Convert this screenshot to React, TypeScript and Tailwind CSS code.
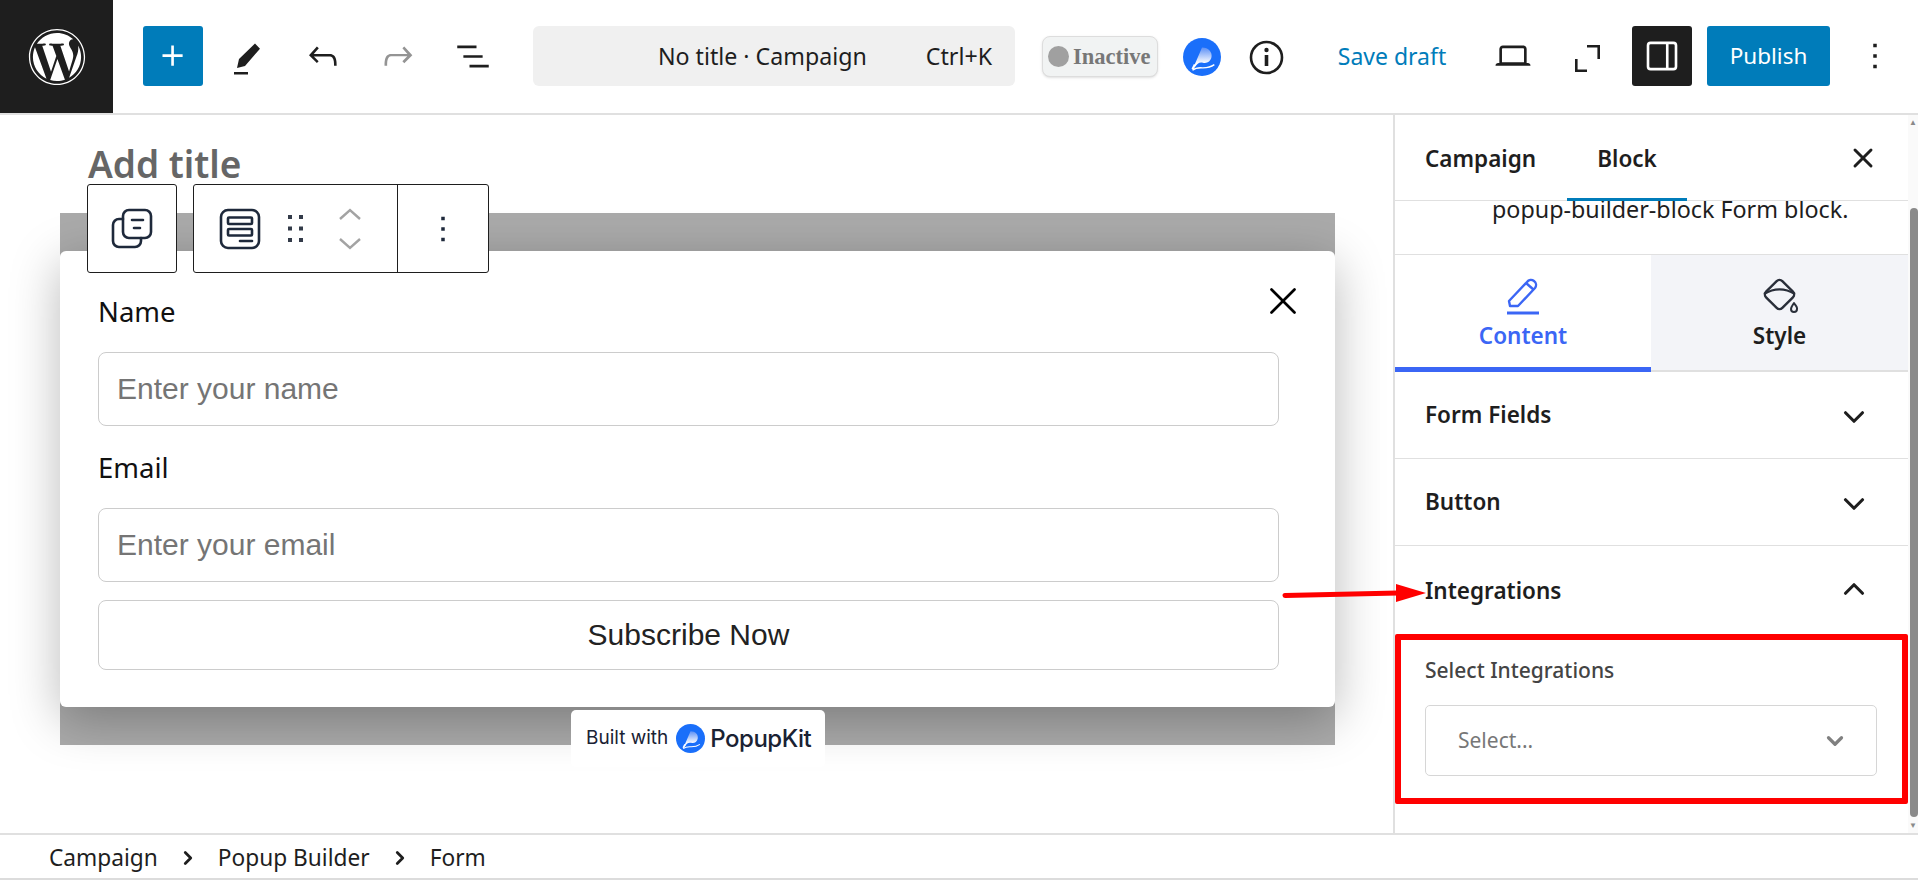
import React from 'react';
import { FaWordpress } from 'react-icons/fa';
import { ChevronDown, ChevronRight, ChevronUp, X } from 'lucide-react';

const WpIcon: React.FC<{ d: string; className?: string; size?: number; box?: number }> = ({ d, className = 'fill-[#1e1e1e]', size = 42, box = 24 }) => (
  <svg width={size} height={size} viewBox={`0 0 ${box} ${box}`} className={className}>
    <path d={d} />
  </svg>
);

const PopupKitLogo: React.FC<{ size: number }> = ({ size }) => (
  <svg width={size} height={size} viewBox="0 0 40 40">
    <defs>
      <linearGradient id="pk" x1="0" y1="0" x2="0" y2="1">
        <stop offset="0" stopColor="#5c90f6" />
        <stop offset="0.8" stopColor="#ffffff" />
      </linearGradient>
    </defs>
    <circle cx="20" cy="20" r="20" fill="#1a6ffa" />
    <path d="M11 31 L20 10 C27 10 31 15 30 20 C29 25 25 27 21 26 C17 25 15 27 13 30Z" fill="url(#pk)" />
    <path d="M10 33 L12.500 28" fill="none" stroke="#ffffff" strokeWidth="2.400" />
    <path d="M10 34 C17 28 23 35 33 28" fill="none" stroke="#ffffff" strokeWidth="1.400" />
  </svg>
);

const IconSlot: React.FC<{ children: React.ReactNode; className?: string }> = ({ children, className = '' }) => (
  <div className={`w-[60px] h-[60px] rounded-[3px] flex items-center justify-center shrink-0 ${className}`}>{children}</div>
);

const Header: React.FC = () => (
  <header className="h-[115px] shrink-0 flex items-start border-b-2 border-[#e0e0e0] bg-white">
    <div className="w-[113px] h-[113px] bg-[#1e1e1e] flex items-center justify-center shrink-0">
      <FaWordpress size={58} className="text-white" />
    </div>
    <div className="flex items-center gap-[15px] ml-[30px] mt-[26px]">
      <IconSlot className="bg-[#007cba]">
        <WpIcon d="M11 12.5V17.5H12.5V12.5H17.5V11H12.5V6H11V11H6V12.5H11Z" className="fill-white" />
      </IconSlot>
      <IconSlot>
        <WpIcon box={42} d="M28 8.500 33 13.700 18 31 10 33 12 24ZM7 37h14v2.400H7Z" />
      </IconSlot>
      <IconSlot>
        <WpIcon d="M18.3 11.700c-.6-.6-1.400-.9-2.300-.9H6.700l2.900-3.300-1.100-1-4.500 5L8.500 16l1-1-2.700-2.700H16c.5 0 .9.2 1.300.5 1 1 1 3.400 1 4.500v.3h1.500v-.2c0-1.500 0-4.300-1.500-5.700z" />
      </IconSlot>
      <IconSlot>
        <WpIcon d="M15.600 6.500l-1.100 1 2.900 3.300H8c-.9 0-1.700.3-2.300.9-1.400 1.500-1.400 4.200-1.400 5.600v.2h1.500v-.3c0-1.100 0-3.500 1-4.500.3-.3.7-.5 1.300-.5h9.200L14.500 15l1.100 1.100 4.600-4.600-4.600-5z" className="fill-[#949494]" />
      </IconSlot>
      <IconSlot>
        <WpIcon d="M3 6h11v1.500H3V6Zm3.500 5.500h11V13h-11v-1.500ZM21 17H10v1.500h11V17Z" />
      </IconSlot>
    </div>
    <div className="ml-[30px] mt-[26px] w-[482px] h-[60px] rounded-[6px] bg-[#f0f0f0] flex items-center justify-end pr-[23px] text-[23.200px] text-[#1e1e1e]">
      <span>No title · Campaign</span>
      <span className="ml-[59px]">Ctrl+K</span>
    </div>
    <div className="ml-[27px] mt-[36px] w-[116px] h-[41px] rounded-[8px] bg-[#f1f3f3] border border-[#dddddd] flex items-center pl-[5px] gap-[4px] shadow-sm">
      <span className="w-[21px] h-[21px] rounded-full bg-[#a0a0a0]" />
      <span className="font-['Liberation_Serif',serif] font-bold text-[22.500px] text-[#777777]">Inactive</span>
    </div>
    <div className="ml-[25px] mt-[38px]">
      <PopupKitLogo size={38} />
    </div>
    <div className="ml-[28px] mt-[40px]">
      <svg width="35" height="35" viewBox="0 0 35 35" fill="none" stroke="#1e1e1e">
        <circle cx="17.500" cy="17.500" r="15.500" strokeWidth="2.600" />
        <path d="M17.500 15v11" strokeWidth="3.600" />
        <circle cx="17.500" cy="10" r="2.200" fill="#1e1e1e" stroke="none" />
      </svg>
    </div>
    <div className="ml-[54px] mt-[26px] w-[108px] h-[60px] flex items-center justify-center text-[23px] text-[#007cba] whitespace-nowrap">Save draft</div>
    <div className="ml-[37px] mt-[26px] flex items-center">
      <IconSlot>
        <WpIcon d="M20.500 16h-.7V8c0-1.100-.9-2-2-2H6.200c-1.100 0-2 .9-2 2v8h-.7c-.8 0-1.500.7-1.500 1.500h20c0-.8-.7-1.500-1.500-1.500zM5.700 8c0-.3.2-.5.5-.5h11.600c.3 0 .5.2.5.5v7.600H5.700V8z" />
      </IconSlot>
      <IconSlot className="ml-[15px]">
        <WpIcon box={42} d="M20 10h13v14h-2.600V12.600H20ZM8 24h2.600v10.400H20V37H8Z" />
      </IconSlot>
      <IconSlot className="ml-[14px] bg-[#1e1e1e]">
        <svg width="42" height="42" viewBox="0 0 24 24" fill="none" stroke="#ffffff" strokeWidth="1.500">
          <rect x="4" y="4.500" width="16" height="15" rx="1.500" />
          <path d="M15 4.500v15" />
        </svg>
      </IconSlot>
      <div className="ml-[15px] w-[123px] h-[60px] rounded-[3px] bg-[#007cba] text-white text-[22.500px] flex items-center justify-center">Publish</div>
      <WpIcon d="M13 19h-2v-2h2v2zm0-6h-2v-2h2v2zm0-6h-2V5h2v2z" className="fill-[#1e1e1e] ml-[24px]" />
    </div>
  </header>
);

const BlockToolbar: React.FC = () => (
  <div className="absolute left-[87px] top-[69px] flex gap-[16px] z-20">
    <div className="w-[90px] h-[89px] bg-white border border-[#1e1e1e] rounded-[3px] flex items-center justify-center">
      <svg width="42" height="42" viewBox="0 0 42 42" fill="none" stroke="#1e293b" strokeWidth="2.600" strokeLinecap="round">
        <rect x="12" y="2" width="28" height="28" rx="6" className="fill-white" />
        <path d="M12 11H8a6 6 0 0 0-6 6v16a6 6 0 0 0 6 6h16a6 6 0 0 0 6-6v-3" />
        <path d="M21 12h11M23 20h6" />
      </svg>
    </div>
    <div className="w-[296px] h-[89px] bg-white border border-[#1e1e1e] rounded-[3px] flex">
      <div className="w-[203px] flex items-center pl-[25px]">
        <svg width="42" height="42" viewBox="0 0 42 42" fill="none" stroke="#1e293b" strokeWidth="2.600" strokeLinecap="round">
          <rect x="2" y="2" width="38" height="38" rx="7" />
          <rect x="9" y="9.500" width="24" height="6.500" rx="1" />
          <rect x="9" y="21" width="24" height="6.500" rx="1" />
          <path d="M21 33h12" />
        </svg>
        <svg width="18" height="27" viewBox="0 0 18 27" className="fill-[#333b49] ml-[26px]">
          <rect x="1" y="0" width="4" height="4" />
          <rect x="12" y="0" width="4" height="4" />
          <rect x="1" y="11.500" width="4" height="4" />
          <rect x="12" y="11.500" width="4" height="4" />
          <rect x="1" y="23" width="4" height="4" />
          <rect x="12" y="23" width="4" height="4" />
        </svg>
        <svg width="24" height="42" viewBox="0 0 24 42" fill="none" stroke="#a3a3a3" strokeWidth="2.400" className="ml-[33px]">
          <path d="M2 11 12 2 22 11M2 31 12 40 22 31" />
        </svg>
      </div>
      <div className="flex-1 border-l border-[#1e1e1e] -my-[1px] flex items-center justify-center">
        <WpIcon d="M13 19h-2v-2h2v2zm0-6h-2v-2h2v2zm0-6h-2V5h2v2z" className="fill-[#1e293b]" />
      </div>
    </div>
  </div>
);

const Field: React.FC<{ label: string; placeholder: string }> = ({ label, placeholder }) => (
  <div>
    <div className="h-[33px] mt-[1px] flex items-center text-[27.500px] text-[#111111]">{label}</div>
    <div className="mt-[24px] h-[74px] border border-[#cccccc] rounded-[8px] flex items-center pl-[18px] pb-[2px] font-['Liberation_Sans',sans-serif] text-[30px] text-[#757575]">
      {placeholder}
    </div>
  </div>
);

const Canvas: React.FC = () => (
  <main className="relative flex-1 overflow-hidden bg-white">
    <div className="pl-[88px] h-[98px] text-[37px] font-semibold text-[#666666] leading-[98px]">Add title</div>
    <BlockToolbar />
    <div className="ml-[60px] w-[1275px] h-[532px] bg-[#aaaaaa] pt-[38px] relative">
      <div className="relative h-[456px] bg-white rounded-[6px] shadow-[0_12px_50px_rgba(0,0,0,0.28)] pl-[38px] pr-[56px] pt-[43px]">
        <X size={46} strokeWidth={1.400} className="absolute right-[29px] top-[27px] text-black" />
        <Field label="Name" placeholder="Enter your name" />
        <div className="mt-[25px]">
          <Field label="Email" placeholder="Enter your email" />
        </div>
        <div className="mt-[18px] h-[70px] border border-[#cccccc] rounded-[8px] flex items-center justify-center pb-[2px] font-['Liberation_Sans',sans-serif] text-[30px] text-[#222222]">
          Subscribe Now
        </div>
      </div>
      <div className="absolute left-[511px] top-[497px] w-[254px] h-[57px] bg-white rounded-[5px] flex items-center pl-[15px] text-[#1a2233] font-['Inter',sans-serif]">
        <span className="text-[19px]">Built with</span>
        <span className="ml-[8px] flex"><PopupKitLogo size={29} /></span>
        <span className="ml-[5px] text-[24px] font-medium tracking-[-0.5px]">PopupKit</span>
      </div>
    </div>
  </main>
);

const AccordionRow: React.FC<{ title: string; open?: boolean; h: string }> = ({ title, open, h }) => (
  <div className={`${h} ${open ? '' : 'border-b border-[#e0e0e0]'} flex items-center justify-between pl-[30px] pr-[37px] shrink-0`}>
    <span className="text-[22.500px] font-semibold text-[#1e1e1e]">{title}</span>
    {open ? <ChevronUp size={34} strokeWidth={2.200} className="text-[#1e1e1e] -mt-[3px]" /> : <ChevronDown size={34} strokeWidth={2.200} className="text-[#1e1e1e] mt-[3px]" />}
  </div>
);

const Sidebar: React.FC = () => (
  <aside className="w-[525px] shrink-0 border-l-2 border-[#e0e0e0] flex bg-white">
    <div className="flex-1 min-w-0 flex flex-col overflow-hidden">
      <div className="h-[86px] shrink-0 border-b border-[#e0e0e0] flex items-center pl-[30px] pr-[29px] pt-[2px] relative z-10 bg-white">
        <span className="text-[22.500px] font-semibold text-[#1e1e1e]">Campaign</span>
        <span className="text-[22.500px] font-semibold text-[#1e1e1e] ml-[61px]">Block</span>
        <X size={32} strokeWidth={2.200} className="ml-auto -mt-[2px] text-[#1e1e1e]" />
        <span className="absolute left-[172px] bottom-[-1px] w-[120px] h-[3px] bg-[#007cba]" />
      </div>
      <div className="h-[54px] shrink-0 border-b border-[#e0e0e0] overflow-hidden pl-[97px]">
        <div className="text-[23.300px] text-[#1e1e1e] leading-[26px] -mt-[5px] whitespace-nowrap">popup-builder-block Form block.</div>
      </div>
      <div className="h-[117px] shrink-0 flex">
        <div className="w-[256px] border-b-[5px] border-[#3b66f5] flex flex-col items-center text-[#3b66f5] pt-[22px]">
          <svg width="36" height="38" viewBox="0 0 36 38" fill="none" stroke="#3b66f5" strokeWidth="2.400" strokeLinejoin="round">
            <path d="M4 24 22 5a5 5 0 0 1 8 6L13 29H5Z" />
            <path d="M21 6l8 7" />
            <path d="M2 36h32" strokeWidth="3" />
          </svg>
          <span className="text-[22.500px] font-semibold mt-[6px] leading-[30px]">Content</span>
        </div>
        <div className="flex-1 bg-[#f3f4f8] border-b-2 border-[#e0e0e0] flex flex-col items-center text-[#1e1e1e] pt-[22px]">
          <svg width="36" height="38" viewBox="0 0 36 38" fill="none" stroke="#2a2f3a" strokeWidth="2.400" strokeLinejoin="round">
            <rect x="6" y="6" width="23" height="23" rx="4" transform="rotate(45 17.500 17.500)" />
            <path d="M2 17c10-6 21-6 31 0" />
            <path d="M32 26c2 3 3.500 4 3 6a3 3 0 0 1-6 0c0-2 1-3 3-6Z" strokeWidth="2" />
          </svg>
          <span className="text-[22.500px] font-semibold mt-[6px] leading-[30px]">Style</span>
        </div>
      </div>
      <AccordionRow title="Form Fields" h="h-[87px]" />
      <AccordionRow title="Button" h="h-[87px]" />
      <AccordionRow title="Integrations" open h="h-[89px]" />
      <div className="pl-[30px] pr-[31px] pt-[22px]">
        <div className="text-[21px] font-medium text-[#444444] leading-[26px]">Select Integrations</div>
        <div className="mt-[22px] h-[71px] border border-[#d6d6d6] rounded-[5px] flex items-center justify-between pl-[32px] pr-[28px]">
          <span className="text-[21px] text-[#777777]">Select...</span>
          <ChevronDown size={26} strokeWidth={3} className="text-[#808080]" />
        </div>
      </div>
    </div>
    <div className="w-[10px] shrink-0 flex flex-col items-end bg-[#fafafa]">
      <div className="h-[14px] w-full flex items-center justify-center text-[8px] text-[#8a8a8a] leading-none">▲</div>
      <div className="mt-[79px] flex-1 w-[8px] bg-[#8a8a8a] rounded-[4px]" />
      <div className="h-[16px] w-full flex items-center justify-center text-[8px] text-[#8a8a8a] leading-none">▼</div>
    </div>
  </aside>
);

const Annotations: React.FC = () => (
  <>
    <svg width="150" height="24" viewBox="0 0 150 24" className="absolute left-[1280px] top-[582px] z-30">
      <path d="M5 13.500 118 11" stroke="#ff0000" strokeWidth="5" strokeLinecap="round" />
      <path d="M116 2 146 11 116 20Z" fill="#ff0000" />
    </svg>
    <div className="absolute left-[1395px] top-[634px] w-[513px] h-[170px] border-[6px] border-[#ff0000] rounded-[2px] z-30" />
  </>
);

export default function App() {
  return (
    <div className="relative w-[1918px] h-[880px] overflow-hidden bg-white flex flex-col font-['Noto_Sans',sans-serif]">
      <Header />
      <div className="flex-1 min-h-0 flex">
        <Canvas />
        <Sidebar />
      </div>
      <footer className="h-[47px] shrink-0 border-t-2 border-b-2 border-t-[#e0e0e0] border-b-[#dcdcdc] flex items-center pl-[49px] pt-[3px] text-[22.700px] text-[#1e1e1e] bg-white">
        <span>Campaign</span>
        <ChevronRight size={22} strokeWidth={3} className="mx-[19px]" />
        <span>Popup Builder</span>
        <ChevronRight size={22} strokeWidth={3} className="mx-[19px]" />
        <span>Form</span>
      </footer>
      <Annotations />
    </div>
  );
}
